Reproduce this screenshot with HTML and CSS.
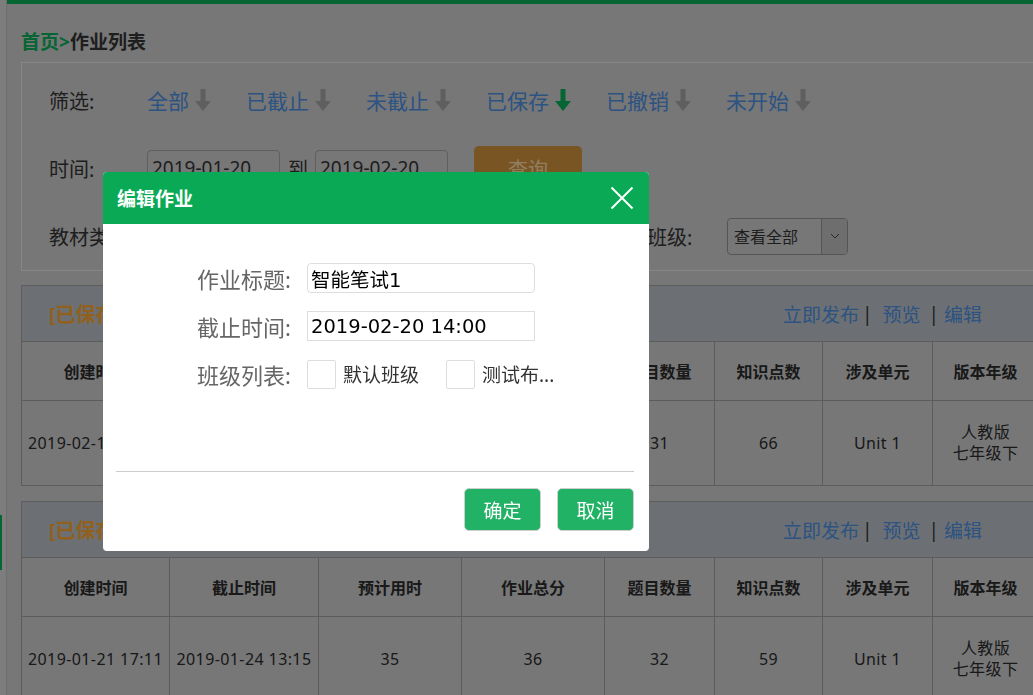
FILE: index.html
```html
<!DOCTYPE html>
<html lang="zh-CN">
<head>
<meta charset="utf-8">
<title>作业列表</title>
<link rel="stylesheet" href="styles.css">
</head>
<body>
<div class="layout">
  <aside class="sidebar"><span class="side-mark"></span></aside>
  <main class="main">
    <div class="topbar"></div>
    <div class="content">
      <div class="crumb"><a class="crumb-home">首页&gt;</a><span>作业列表</span></div>

      <section class="filter">
        <div class="frow">
          <span class="flabel">筛选:</span>
          <a class="ftab">全部<svg class="arrow" viewBox="0 0 18 24"><rect x="6.5" y="1" width="5" height="13"/><polygon points="1,13 17,13 9,23"/></svg></a>
          <a class="ftab">已截止<svg class="arrow" viewBox="0 0 18 24"><rect x="6.5" y="1" width="5" height="13"/><polygon points="1,13 17,13 9,23"/></svg></a>
          <a class="ftab">未截止<svg class="arrow" viewBox="0 0 18 24"><rect x="6.5" y="1" width="5" height="13"/><polygon points="1,13 17,13 9,23"/></svg></a>
          <a class="ftab">已保存<svg class="arrow on" viewBox="0 0 18 24"><rect x="6.5" y="1" width="5" height="13"/><polygon points="1,13 17,13 9,23"/></svg></a>
          <a class="ftab">已撤销<svg class="arrow" viewBox="0 0 18 24"><rect x="6.5" y="1" width="5" height="13"/><polygon points="1,13 17,13 9,23"/></svg></a>
          <a class="ftab">未开始<svg class="arrow" viewBox="0 0 18 24"><rect x="6.5" y="1" width="5" height="13"/><polygon points="1,13 17,13 9,23"/></svg></a>
        </div>
        <div class="frow">
          <span class="flabel">时间:</span>
          <span class="date">2019-01-20</span>
          <span class="to">到</span>
          <span class="date">2019-02-20</span>
          <button class="query">查询</button>
        </div>
        <div class="frow">
          <span class="flabel">教材类型:</span>
          <span class="select sel-book"><span class="sel-text">全部教材</span><span class="sel-btn"><svg viewBox="0 0 10 6"><polyline points="1,1 5,5 9,1"/></svg></span></span>
          <span class="flabel short gap-l">学科:</span>
          <span class="select sel-subject"><span class="sel-text">英语</span><span class="sel-btn"><svg viewBox="0 0 10 6"><polyline points="1,1 5,5 9,1"/></svg></span></span>
          <span class="flabel cls gap-l">班级:</span>
          <span class="select sel-class"><span class="sel-text">查看全部</span><span class="sel-btn"><svg viewBox="0 0 10 6"><polyline points="1,1 5,5 9,1"/></svg></span></span>
        </div>
      </section>

      <section class="task">
        <div class="task-head">
          <span class="task-title">[已保存] 智能笔试1</span>
          <span class="task-ops"><a>立即发布</a><i class="sep1">|</i><a>预览</a><i class="sep2">|</i><a>编辑</a></span>
        </div>
        <table class="grid">
          <colgroup><col class="c1"><col class="c2"><col class="c3"><col class="c4"><col class="c5"><col class="c6"><col class="c7"><col class="c8"></colgroup>
          <thead>
            <tr><th>创建时间</th><th>截止时间</th><th>预计用时</th><th>作业总分</th><th>题目数量</th><th>知识点数</th><th>涉及单元</th><th>版本年级</th></tr>
          </thead>
          <tbody>
            <tr><td>2019-02-19 17:24</td><td>2019-02-20 14:00</td><td>30</td><td>34</td><td>31</td><td>66</td><td>Unit 1</td><td>人教版<br>七年级下</td></tr>
          </tbody>
        </table>
      </section>

      <section class="task">
        <div class="task-head">
          <span class="task-title">[已保存] 智能笔试</span>
          <span class="task-ops"><a>立即发布</a><i class="sep1">|</i><a>预览</a><i class="sep2">|</i><a>编辑</a></span>
        </div>
        <table class="grid">
          <colgroup><col class="c1"><col class="c2"><col class="c3"><col class="c4"><col class="c5"><col class="c6"><col class="c7"><col class="c8"></colgroup>
          <thead>
            <tr><th>创建时间</th><th>截止时间</th><th>预计用时</th><th>作业总分</th><th>题目数量</th><th>知识点数</th><th>涉及单元</th><th>版本年级</th></tr>
          </thead>
          <tbody>
            <tr><td>2019-01-21 17:11</td><td>2019-01-24 13:15</td><td>35</td><td>36</td><td>32</td><td>59</td><td>Unit 1</td><td>人教版<br>七年级下</td></tr>
          </tbody>
        </table>
      </section>
    </div>
  </main>
</div>

<div class="mask"></div>

<div class="dialog">
  <div class="dlg-head">
    <span>编辑作业</span>
    <svg class="dlg-close" viewBox="0 0 24 24"><line x1="1.5" y1="1.5" x2="22.5" y2="22.5"/><line x1="22.5" y1="1.5" x2="1.5" y2="22.5"/></svg>
  </div>
  <div class="dlg-body">
    <div class="field">
      <span class="field-label">作业标题:</span>
      <span class="text-input rounded">智能笔试1</span>
    </div>
    <div class="field">
      <span class="field-label">截止时间:</span>
      <span class="text-input">2019-02-20 14:00</span>
    </div>
    <div class="field">
      <span class="field-label">班级列表:</span>
      <span class="check"></span><span class="check-label">默认班级</span>
      <span class="check"></span><span class="check-label">测试布...</span>
    </div>
  </div>
  <div class="dlg-line"></div>
  <div class="dlg-foot">
    <button class="btn">确定</button>
    <button class="btn">取消</button>
  </div>
</div>
</body>
</html>
```

FILE: styles.css
```css
* { box-sizing: border-box; }
html, body { margin: 0; height: 100%; overflow: hidden; }
body {
  background: #c6c6c6;
  font-family: "Noto Sans", "Noto Sans CJK SC", sans-serif;
  color: #333;
}
a { cursor: pointer; }

.layout { display: flex; min-height: 100%; }
.sidebar {
  width: 7px; flex: none;
  background: #d0d0d0;
  border-right: 1px solid #b8b8b8;
  padding-top: 515px;
}
.side-mark { display: block; width: 2px; height: 55px; background: #0aa955; }
.main { flex: 1; min-width: 0; }
.topbar { height: 4px; background: #0aa955; }
.content { width: 1031px; padding-left: 14px; }

.crumb {
  height: 58px; padding-top: 26px;
  font-size: 19px; font-weight: bold; line-height: 24px;
  color: #333;
}
.crumb-home { color: #0aa955; }

/* filter panel */
.filter {
  border: 1px solid #e1e1e1;
  padding: 3px 0 0 27px;
}
.frow { display: flex; align-items: center; height: 68px; }
.flabel { width: 98px; flex: none; font-size: 20px; color: #333; }
.flabel.short { width: 60px; }
.flabel.cls { width: 80px; }
.gap-l { margin-left: 30px; }
.ftab {
  display: inline-flex; align-items: center;
  font-size: 21px; color: #4a8ad8;
  margin-right: 34px;
}
.arrow { width: 18px; height: 24px; margin-left: 5px; fill: #9e9e9e; }
.arrow.on { fill: #0aa955; }

.date {
  width: 133px; height: 36px;
  border: 1px solid #9e9e9e; border-radius: 4px;
  padding: 0 4px;
  display: flex; align-items: center;
  font-size: 19px; color: #333;
}
.to { font-size: 20px; margin: 0 7px 0 8px; }
.query {
  margin-left: 26px;
  width: 108px; height: 44px;
  border: none; border-radius: 5px;
  background: #c88e3a; color: #f4d3a6;
  font-family: inherit; font-size: 20px;
}

.select {
  display: flex; height: 37px;
  border: 1px solid #8e8e8e; border-radius: 4px;
  overflow: hidden;
}
.sel-book { width: 200px; }
.sel-subject { width: 180px; }
.sel-class { width: 121px; }
.sel-text { flex: 1; display: flex; align-items: center; padding-left: 6px; font-size: 16px; color: #333; }
.sel-btn {
  width: 26px; flex: none;
  border-left: 1px solid #8e8e8e;
  background: #b8b8b8;
  display: flex; align-items: center; justify-content: center;
}
.sel-btn svg { width: 10px; height: 6px; fill: none; stroke: #444; stroke-width: 1; }

/* task tables */
.task { margin-top: 14px; width: 1017px; }
.task + .task { margin-top: 15px; }
.task-head {
  height: 56px;
  border: 1px solid #9a9a9a; border-bottom: none;
  background: #b4bbc1;
  display: flex; align-items: center; justify-content: space-between;
  padding: 0 55px 0 27px;
}
.task-title { font-size: 20px; font-weight: bold; color: #f0a030; }
.task-ops { font-size: 19px; display: flex; align-items: center; }
.task-ops a { color: #4a8ad8; }
.task-ops i { font-style: normal; color: #333; }
.task-ops .sep1 { margin: 0 10px 0 3px; }
.task-ops .sep2 { margin: 0 5px 0 8px; }

.grid { width: 1017px; border-collapse: collapse; table-layout: fixed; }
.c1 { width: 148px; } .c2 { width: 149px; } .c3 { width: 143px; } .c4 { width: 143px; }
.c5 { width: 110px; } .c6 { width: 108px; } .c7 { width: 110px; } .c8 { width: 106px; }
.grid th, .grid td {
  border: 1px solid #9a9a9a;
  text-align: center; padding: 0;
  color: #2a2a2a;
  font-size: 16px;
}
.grid th { height: 59px; font-weight: bold; }
.grid td { height: 85px; line-height: 21px; white-space: nowrap; letter-spacing: 0.4px; }

/* modal */
.mask { position: fixed; inset: 0; background: rgba(0, 0, 0, 0.4); }
.dialog {
  position: fixed; left: 103px; top: 172px;
  width: 546px; height: 379px;
  background: #fff; border-radius: 4px; overflow: hidden;
  display: flex; flex-direction: column;
}
.dlg-head {
  height: 52px; flex: none;
  background: #0aa955; color: #fff;
  display: flex; align-items: center; justify-content: space-between;
  padding: 0 15px 0 14px;
  font-size: 19px; font-weight: bold;
}
.dlg-close { width: 24px; height: 24px; stroke: #fff; stroke-width: 2; }
.dlg-body {
  height: 247px; flex: none;
  padding: 39px 0 0 68px;
  display: flex; flex-direction: column; gap: 18px;
}
.field { display: flex; align-items: center; height: 30px; }
.field-label { width: 120px; text-align: right; margin-right: 16px; font-size: 22px; color: #666; }
.text-input {
  width: 228px; height: 30px;
  border: 1px solid #ddd;
  padding: 0 3px;
  display: flex; align-items: center;
  font-family: "DejaVu Sans", "Noto Sans CJK SC", sans-serif;
  font-size: 19.5px; color: #000;
}
.text-input.rounded { border-radius: 4px; }
.check { width: 29px; height: 29px; border: 1px solid #ddd; border-radius: 2px; flex: none; }
.check-label { font-size: 19px; color: #333; margin: 0 27px 0 7px; }
.dlg-line { height: 1px; flex: none; background: #ccc; margin: 0 15px 0 13px; }
.dlg-foot { display: flex; justify-content: flex-end; gap: 16px; padding: 16px 15px 20px; }
.btn {
  width: 77px; height: 43px;
  border: 1px solid #cfcfcf; border-radius: 5px;
  background: #22b266; color: #fff;
  font-family: inherit; font-size: 19px;
}
```
